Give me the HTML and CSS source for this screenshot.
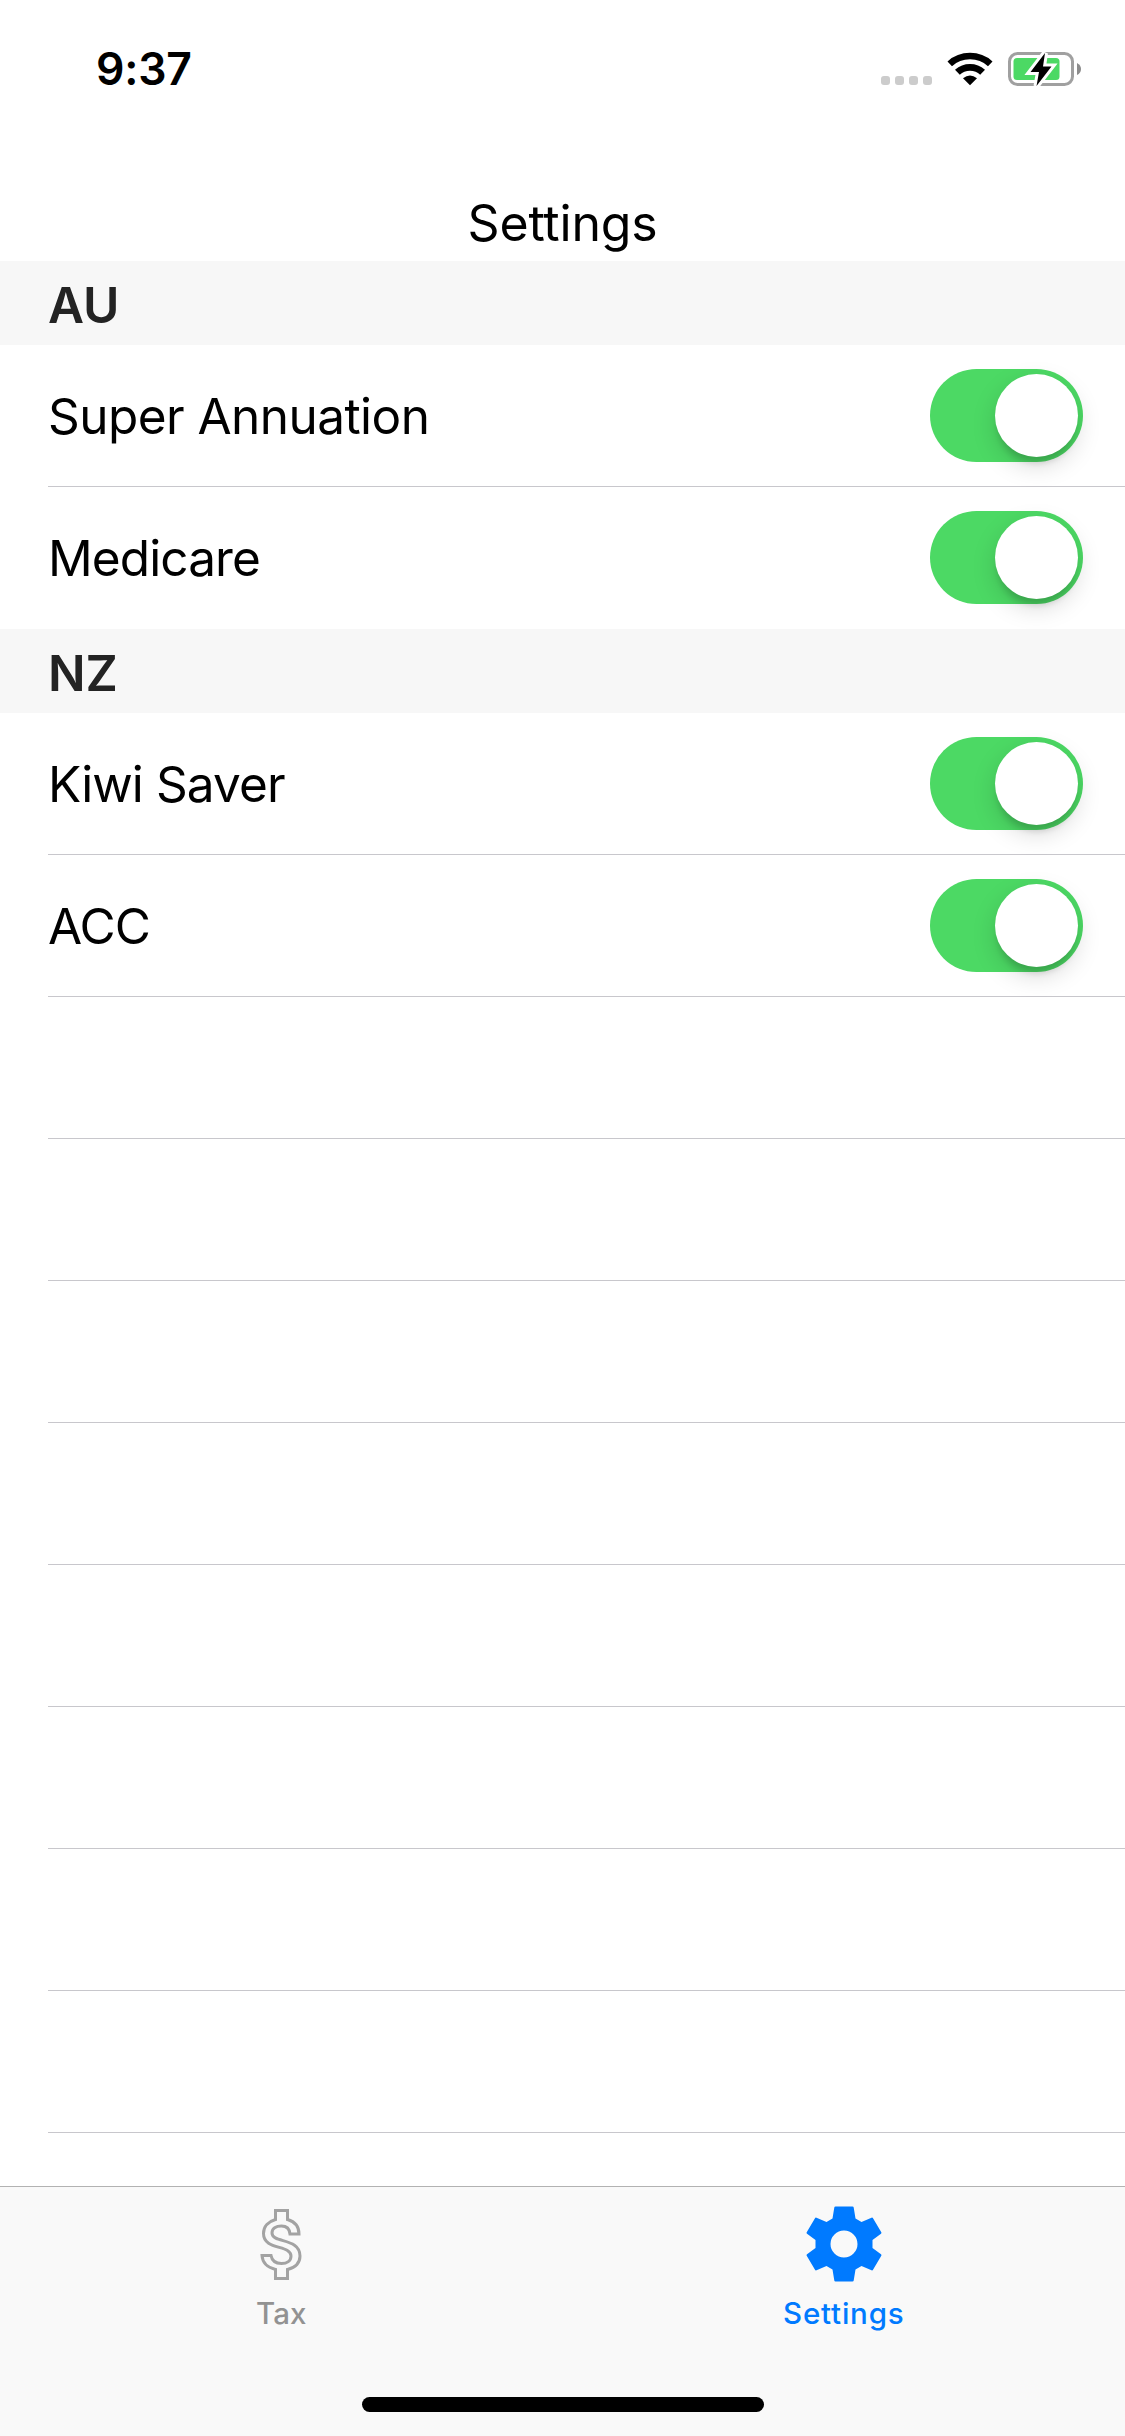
FILE: index.html
```html
<!DOCTYPE html>
<html lang="en">
<head>
<meta charset="utf-8">
<title>Settings</title>
<link rel="stylesheet" href="styles.css">
</head>
<body>
<div class="screen">
  <header class="status-bar">
    <span class="time">9:37</span>
    <div class="indicators">
      <div class="signal"><i></i><i></i><i></i><i></i></div>
      <svg class="wifi" width="46" height="34" viewBox="0 0 46 34">
        <path d="M0.500 9.400Q10 0.800 23 0.800T45.500 9.400L41 14.200Q33.500 7.300 23 7.300T5 14.200Z"/>
        <path d="M8 17.800Q14.500 11.900 23 11.900T38 17.800L33.200 22.700Q29 18.700 23 18.700T12.800 22.700Z"/>
        <path d="M16 26.200Q23 20.800 30 26.200L23 33.200Z"/>
      </svg>
      <svg class="battery" width="74" height="38" viewBox="0 0 74 38">
        <rect x="1.500" y="3.500" width="63" height="31" rx="8" fill="none" stroke="#a0a0a0" stroke-width="3"/>
        <rect x="5.500" y="8" width="46" height="22" rx="3.500" fill="#4cd964"/>
        <path d="M69 13Q73 15 73 19T69 25Z" fill="#8c8c8c"/>
        <path d="M37 3L22.500 22H31L28.500 36L43.500 16.500H35Z" fill="#000" stroke="#fff" stroke-width="6" paint-order="stroke"/>
      </svg>
    </div>
  </header>
  <h1 class="title">Settings</h1>
  <main class="table">
    <h2 class="section">AU</h2>
    <div class="row"><span class="label wide">Super Annuation</span><span class="switch"><i></i></span></div>
    <div class="row last"><span class="label">Medicare</span><span class="switch"><i></i></span></div>
    <h2 class="section">NZ</h2>
    <div class="row"><span class="label">Kiwi Saver</span><span class="switch"><i></i></span></div>
    <div class="row"><span class="label">ACC</span><span class="switch"><i></i></span></div>
    <div class="row"></div><div class="row"></div><div class="row"></div><div class="row"></div>
    <div class="row"></div><div class="row"></div><div class="row"></div><div class="row"></div>
  </main>
  <nav class="tab-bar">
    <div class="tabs">
      <div class="tab">
        <svg width="76" height="76" viewBox="0 0 76 76">
          <path d="M32.500 4.500H44.500V13.500C51.500 15.500 56 20.500 56 28H47C46.500 22.500 43 20 38.500 20C33 20 29 22.500 29 27C29 37.500 57 31.500 57 50C57 57.500 52 61.500 44.500 63.500V72.500H32.500V63.500C24.500 61.500 19.500 57 19 49.500H28C29 55 33 57.500 38.500 57.500C44 57.500 48 55 48 50C48 38.500 20.500 44.500 20.500 27.500C20.500 20.500 25.500 15.500 32.500 13.500Z" fill="none" stroke="#a3a3a3" stroke-width="3"/>
        </svg>
        <span>Tax</span>
      </div>
      <div class="tab active">
        <svg width="76" height="76" viewBox="0 0 76 76">
          <path fill="#007aff" fill-rule="evenodd" d="M29.500 0.500H46.500Q47.500 0.500 47.700 1.500L49.500 12.500L55.500 16L65.500 11.700Q66.500 11.300 67 12.200L75.300 26.300Q75.800 27.200 75 27.800L66.500 34V42L75 48.200Q75.800 48.800 75.300 49.700L67 63.800Q66.500 64.700 65.500 64.300L55.500 60L49.500 63.500L47.700 74.500Q47.500 75.500 46.500 75.500H29.500Q28.500 75.500 28.300 74.500L26.500 63.500L20.500 60L10.500 64.300Q9.500 64.700 9 63.800L0.700 49.700Q0.200 48.800 1 48.200L9.500 42V34L1 27.800Q0.200 27.200 0.700 26.300L9 12.200Q9.500 11.300 10.500 11.700L20.500 16L26.500 12.500L28.300 1.500Q28.500 0.500 29.500 0.500ZM38 24.500A13.500 13.500 0 1 0 38 51.500A13.500 13.500 0 1 0 38 24.500Z"/>
        </svg>
        <span>Settings</span>
      </div>
    </div>
    <div class="home-indicator"></div>
  </nav>
</div>
</body>
</html>
```
FILE: styles.css
```css
* { box-sizing: border-box; }
body {
  margin: 0;
  background: #fff;
  color: #000;
  font-family: Inter, "Liberation Sans", sans-serif;
}
.screen {
  width: 1125px;
  height: 2436px;
  display: flex;
  flex-direction: column;
  overflow: hidden;
}
.status-bar {
  height: 132px;
  flex: none;
  display: flex;
  justify-content: space-between;
  padding: 0 43px 0 96px;
}
.time {
  font-size: 44.5px;
  font-weight: 600;
  line-height: 54px;
  margin-top: 42px;
  letter-spacing: -0.2px;
}
.indicators {
  display: flex;
  align-items: flex-start;
  padding-top: 50px;
}
.signal { display: flex; gap: 5px; margin: 26px 15px 0 0; }
.signal i { width: 9px; height: 9px; border-radius: 3px; background: #ccc; }
.wifi { margin: 2px 15px 0 0; }
.title {
  flex: none;
  height: 129px;
  margin: 0;
  padding-top: 61px;
  font-size: 50px;
  font-weight: 400;
  line-height: 60px;
  letter-spacing: -0.2px;
  text-align: center;
}
.table { flex: 1; min-height: 0; overflow: hidden; }
.section {
  height: 84px;
  margin: 0;
  padding: 2px 0 0 48px;
  background: #f7f7f7;
  color: #232323;
  font-size: 49.5px;
  font-weight: 600;
  line-height: 84px;
}
.row {
  height: 142px;
  margin-left: 48px;
  padding-right: 42px;
  border-bottom: 1px solid #c8c7cc;
  display: flex;
  align-items: center;
  justify-content: space-between;
}
.row.last { border-bottom-color: transparent; }
.label { font-size: 49.5px; line-height: 60px; letter-spacing: -0.9px; }
.label.wide { letter-spacing: -0.55px; }
.switch {
  width: 153px;
  height: 93px;
  padding: 5px;
  border-radius: 47px;
  background: #4cd964;
  display: flex;
  justify-content: flex-end;
}
.switch i {
  width: 83px;
  height: 83px;
  border-radius: 50%;
  background: #fff;
  box-shadow: 0 9px 24px rgba(0, 0, 0, 0.15), 0 9px 6px -3px rgba(0, 0, 0, 0.14);
}
.tab-bar {
  flex: none;
  height: 250px;
  border-top: 1px solid #b2b2b2;
  background: #f9f9f9;
  display: flex;
  flex-direction: column;
  justify-content: space-between;
  align-items: center;
  padding: 19px 0 24px;
}
.tabs { display: flex; width: 100%; }
.tab {
  flex: 1;
  display: flex;
  flex-direction: column;
  align-items: center;
  gap: 13px;
  color: #929292;
  font-size: 29.5px;
  font-weight: 500;
  line-height: 36px;
}
.tab svg { display: block; }
.tab.active { color: #007aff; letter-spacing: 0.8px; }
.home-indicator { width: 402px; height: 15px; border-radius: 8px; background: #000; }
```
